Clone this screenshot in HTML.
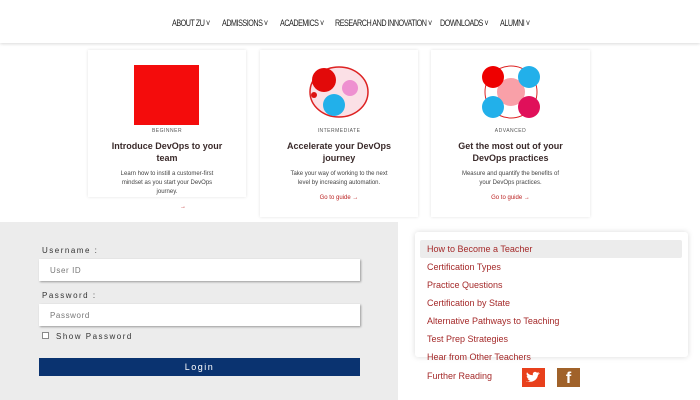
<!DOCTYPE html>
<html><head><meta charset="utf-8"><style>
*{margin:0;padding:0;box-sizing:border-box}
body{width:700px;height:400px;position:relative;background:#fff;font-family:"Liberation Sans",sans-serif;overflow:hidden}
.nav{position:absolute;left:0;top:0;width:700px;height:43px;background:#fff;box-shadow:0 1px 3px rgba(0,0,0,.15)}
.nav span{position:absolute;top:18px;font-size:9px;color:#222;letter-spacing:-.6px;transform:scaleX(.8);transform-origin:left;white-space:nowrap}
.card{position:absolute;top:50px;background:#fff;box-shadow:0 0 3px rgba(0,0,0,.12);text-align:center}
.lbl{position:absolute;top:78px;width:100%;font-size:5px;letter-spacing:.5px;color:#555}
.t{position:absolute;top:90px;width:100%;font-size:9px;font-weight:bold;color:#3a2a2a;line-height:12px}
.d{position:absolute;top:120px;width:100%;font-size:6px;color:#444;line-height:9px}
.g{position:absolute;width:100%;font-size:6px;color:#b22}
.login{position:absolute;left:0;top:222px;width:398px;height:178px;background:#ececec}
.lab{position:absolute;left:42px;font-size:8px;letter-spacing:1.5px;color:#333}
.inp{position:absolute;left:39px;width:321px;height:22px;background:#fff;box-shadow:1px 1px 2px rgba(0,0,0,.35);font-size:8px;color:#777;padding:7px 0 0 11px;letter-spacing:.6px}
.btn{position:absolute;left:39px;top:358px;width:321px;height:18px;background:#0a3370;color:#fff;font-size:9px;letter-spacing:1.5px;text-align:center;line-height:18px}
.menu{position:absolute;left:415px;top:232px;width:273px;height:125px;background:#fff;box-shadow:0 0 6px rgba(0,0,0,.15);border-radius:3px}
.hl{position:absolute;left:420px;top:240px;width:262px;height:18px;background:#ececec;border-radius:2px}
.mi{position:absolute;left:427px;font-size:9px;color:#a52a2a}
</style></head><body>
<div class="nav">
<span style="left:172px">ABOUT ZU ˅</span>
<span style="left:222px">ADMISSIONS ˅</span>
<span style="left:280px">ACADEMICS ˅</span>
<span style="left:335px">RESEARCH AND INNOVATION ˅</span>
<span style="left:440px">DOWNLOADS ˅</span>
<span style="left:500px">ALUMNI ˅</span>
</div>
<div class="card" style="left:88px;width:158px;height:147px">
<div style="position:absolute;left:46px;top:15px;width:65px;height:60px;background:#f40c0c"></div>
<div class="lbl">BEGINNER</div>
<div class="t">Introduce DevOps to your<br>team</div>
<div class="d">Learn how to instill a customer-first<br>mindset as you start your DevOps<br>journey.</div>
</div>
<div class="g" style="left:88px;width:190px;top:204px;text-align:center">→</div>
<div class="card" style="left:260px;width:158px;height:167px">
<svg style="position:absolute;left:46px;top:15px" width="66" height="55"><ellipse cx="33" cy="27" rx="29" ry="25" fill="#fbe0e6" stroke="#d22" stroke-width="1.5"/><circle cx="18" cy="15" r="12" fill="#e20a0a"/><circle cx="44" cy="23" r="8" fill="#ee90d0"/><circle cx="28" cy="40" r="11" fill="#22b0ea"/><circle cx="8" cy="30" r="3" fill="#d11"/></svg>
<div class="lbl">INTERMEDIATE</div>
<div class="t">Accelerate your DevOps<br>journey</div>
<div class="d">Take your way of working to the next<br>level by increasing automation.</div>
<div class="g" style="top:145px">Go to guide →</div>
</div>
<div class="card" style="left:431px;width:159px;height:167px">
<svg style="position:absolute;left:48px;top:15px" width="64" height="55"><circle cx="32" cy="27" r="26" fill="none" stroke="#d22" stroke-width="1"/><circle cx="32" cy="27" r="14" fill="#f9a0a8"/><circle cx="14" cy="12" r="11" fill="#e00"/><circle cx="50" cy="12" r="11" fill="#22b0ea"/><circle cx="14" cy="42" r="11" fill="#22b0ea"/><circle cx="50" cy="42" r="11" fill="#e0105a"/></svg>
<div class="lbl">ADVANCED</div>
<div class="t">Get the most out of your<br>DevOps practices</div>
<div class="d">Measure and quantify the benefits of<br>your DevOps practices.</div>
<div class="g" style="top:145px">Go to guide →</div>
</div>
<div class="login"></div>
<div class="lab" style="top:246px">Username :</div>
<div class="inp" style="top:259px">User ID</div>
<div class="lab" style="top:291px">Password :</div>
<div class="inp" style="top:304px">Password</div>
<div style="position:absolute;left:42px;top:332px;width:7px;height:7px;border:1px solid #888;background:#fff"></div>
<div class="lab" style="top:332px;left:56px">Show Password</div>
<div class="btn">Login</div>
<div class="menu"></div>
<div class="hl"></div>
<div class="mi" style="top:244px">How to Become a Teacher</div>
<div class="mi" style="top:262px">Certification Types</div>
<div class="mi" style="top:280px">Practice Questions</div>
<div class="mi" style="top:298px">Certification by State</div>
<div class="mi" style="top:316px">Alternative Pathways to Teaching</div>
<div class="mi" style="top:334px">Test Prep Strategies</div>
<div class="mi" style="top:352px">Hear from Other Teachers</div>
<div class="mi" style="top:371px">Further Reading</div>
<svg style="position:absolute;left:522px;top:368px" width="23" height="19"><rect width="23" height="19" fill="#e8401c"/><path d="M5 13c4 2 10 0 11-6l2-2-2 .5 1-1.5-2 .7c-2-2-5 0-4 2.5-3 0-5-1.5-6-3-1 2 0 3.5 1 4l-1.3-.3c0 1.5 1 2.5 2.3 2.8h-1.5c.5 1 1.5 1.6 2.8 1.6-1.3 1-3 1.3-4.3 1.2z" fill="#fff"/></svg>
<div style="position:absolute;left:557px;top:368px;width:23px;height:19px;background:#a0622a;color:#fff;font-weight:bold;font-size:16px;text-align:center;line-height:21px">f</div>
</body></html>
